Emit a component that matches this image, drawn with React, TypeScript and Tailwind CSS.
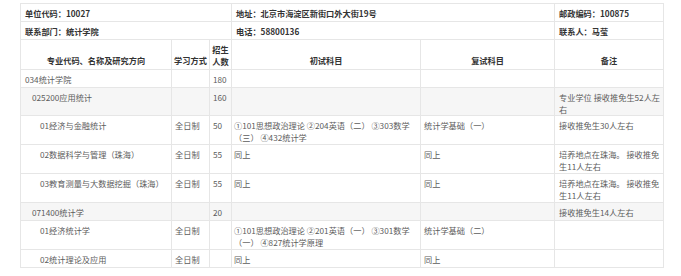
import React from 'react'

type Row = {
  name: string
  level: 0 | 1 | 2
  mode?: string
  count?: string
  exam1?: string[]
  exam2?: string
  note?: string[]
  shaded?: boolean
  h: string
}

const rows: Row[] = [
  { name: '034统计学院', level: 0, count: '180', h: 'h-[18px]' },
  {
    name: '025200应用统计',
    level: 1,
    count: '160',
    note: ['专业学位 接收推免生52人左', '右'],
    shaded: true,
    h: 'h-[27px]',
  },
  {
    name: '01经济与金融统计',
    level: 2,
    mode: '全日制',
    count: '50',
    exam1: ['①101思想政治理论 ②204英语（二） ③303数学', '（三） ④432统计学'],
    exam2: '统计学基础（一）',
    note: ['接收推免生30人左右'],
    h: 'h-[29px]',
  },
  {
    name: '02数据科学与管理（珠海）',
    level: 2,
    mode: '全日制',
    count: '55',
    exam1: ['同上'],
    exam2: '同上',
    note: ['培养地点在珠海。 接收推免', '生11人左右'],
    h: 'h-[29px]',
  },
  {
    name: '03教育测量与大数据挖掘（珠海）',
    level: 2,
    mode: '全日制',
    count: '55',
    exam1: ['同上'],
    exam2: '同上',
    note: ['培养地点在珠海。 接收推免', '生11人左右'],
    h: 'h-[29px]',
  },
  {
    name: '071400统计学',
    level: 1,
    count: '20',
    note: ['接收推免生14人左右'],
    shaded: true,
    h: 'h-[18px]',
  },
  {
    name: '01经济统计学',
    level: 2,
    mode: '全日制',
    exam1: ['①101思想政治理论 ②201英语（一） ③301数学', '（一） ④827统计学原理'],
    exam2: '统计学基础（二）',
    h: 'h-[29px]',
  },
  {
    name: '02统计理论及应用',
    level: 2,
    mode: '全日制',
    exam1: ['同上'],
    exam2: '同上',
    h: 'h-[18px]',
  },
]

const indent = ['pl-[4px]', 'pl-[11px]', 'pl-[19px]']

// shared cell look
const td = 'border border-[#e6e6e6] align-top pt-[3px] px-[3px] leading-[12px] whitespace-nowrap'
const top = 'border border-[#e6e6e6] align-middle px-[4px] leading-[12px] font-semibold text-[#333] whitespace-nowrap'
const th = 'border border-[#e6e6e6] align-bottom pb-[3px] px-[2px] leading-[12px] font-bold text-[#333] text-center'

const Lines = ({ lines }: { lines?: string[] }) => (
  <>
    {lines?.map((l, i) => (
      <React.Fragment key={i}>
        {i > 0 && <br />}
        {l}
      </React.Fragment>
    ))}
  </>
)

export default function App() {
  return (
    <div
      className="w-[681px] h-[276px] bg-white pt-[3px] pl-[20px] text-[8.2px] text-[#5c5c5c]"
      style={{ fontFamily: '"Noto Sans CJK SC", "Noto Sans", sans-serif' }}
    >
      <table className="table-fixed border-collapse w-[643px]">
        <colgroup>
          <col className="w-[151px]" />
          <col className="w-[38px]" />
          <col className="w-[22px]" />
          <col className="w-[189px]" />
          <col className="w-[134px]" />
          <col className="w-[109px]" />
        </colgroup>
        <tbody>
          <tr className="h-[18px]">
            <td colSpan={3} className={top}>单位代码：10027</td>
            <td colSpan={2} className={top}>地址：北京市海淀区新街口外大街19号</td>
            <td className={top}>邮政编码：100875</td>
          </tr>
          <tr className="h-[18px]">
            <td colSpan={3} className={top}>联系部门：统计学院</td>
            <td colSpan={2} className={top}>电话：58800136</td>
            <td className={top}>联系人：马莹</td>
          </tr>
          <tr className="h-[30px]">
            <th className={th}>专业代码、名称及研究方向</th>
            <th className={th}>学习方式</th>
            <th className="border border-[#e6e6e6] align-middle leading-[12px] font-bold text-[#333] text-center">
              招生
              <br />
              人数
            </th>
            <th className={th}>初试科目</th>
            <th className={th}>复试科目</th>
            <th className={th}>备注</th>
          </tr>
          {rows.map((r) => (
            <tr key={r.name} className={`${r.h} ${r.shaded ? 'bg-[#f6f6f6]' : 'bg-white'}`}>
              <td className={`${td} ${indent[r.level]}`}>{r.name}</td>
              <td className={td}>{r.mode}</td>
              <td className={td}>{r.count}</td>
              <td className={`${td} pl-[2px]`}>
                <Lines lines={r.exam1} />
              </td>
              <td className={td}>{r.exam2}</td>
              <td className={`${td} pl-[4px]`}>
                <Lines lines={r.note} />
              </td>
            </tr>
          ))}
        </tbody>
      </table>
    </div>
  )
}
